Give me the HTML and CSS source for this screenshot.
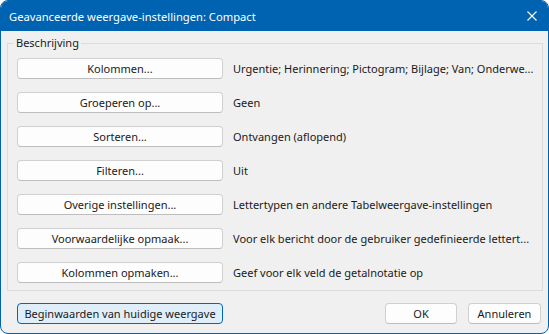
FILE: index.html
```html
<!DOCTYPE html>
<html lang="nl">
<head>
    <meta charset="UTF-8">
    <meta name="viewport" content="width=device-width, initial-scale=1.0">
    <title>Geavanceerde weergave-instellingen: Compact</title>
    <link rel="stylesheet" href="styles.css">
</head>
<body>
    <div class="window">
        <div class="titlebar">
            <span class="title">Geavanceerde weergave-instellingen: Compact</span>
            <svg class="close" width="10" height="10" viewBox="0 0 10 10">
                <path d="M0.5 0.5 L9.5 9.5 M9.5 0.5 L0.5 9.5" stroke="#fff" stroke-width="1.1" fill="none"/>
            </svg>
        </div>

        <fieldset class="group">
            <legend>Beschrijving</legend>
            <div class="row">
                <button class="btn wide">Kolommen...</button>
                <span class="desc">Urgentie; Herinnering; Pictogram; Bijlage; Van; Onderwe...</span>
            </div>
            <div class="row">
                <button class="btn wide">Groeperen op...</button>
                <span class="desc">Geen</span>
            </div>
            <div class="row">
                <button class="btn wide">Sorteren...</button>
                <span class="desc">Ontvangen (aflopend)</span>
            </div>
            <div class="row">
                <button class="btn wide">Filteren...</button>
                <span class="desc">Uit</span>
            </div>
            <div class="row">
                <button class="btn wide">Overige instellingen...</button>
                <span class="desc">Lettertypen en andere Tabelweergave-instellingen</span>
            </div>
            <div class="row">
                <button class="btn wide">Voorwaardelijke opmaak...</button>
                <span class="desc">Voor elk bericht door de gebruiker gedefinieerde lettert...</span>
            </div>
            <div class="row">
                <button class="btn wide">Kolommen opmaken...</button>
                <span class="desc">Geef voor elk veld de getalnotatie op</span>
            </div>
        </fieldset>

        <div class="footer">
            <button class="btn wide primary">Beginwaarden van huidige weergave</button>
            <div class="spacer"></div>
            <button class="btn ok">OK</button>
            <button class="btn cancel">Annuleren</button>
        </div>
    </div>
</body>
</html>
```

FILE: styles.css
```css
body {
    margin: 0;
    background: #ffffff;
    font-family: "Noto Sans", "Open Sans", sans-serif;
    font-size: 11px;
    color: #1a1a1a;
}

.window {
    box-sizing: border-box;
    width: 549px;
    height: 334px;
    border: 1px solid #0063b1;
    border-radius: 8px;
    background: #f0f0f0;
    overflow: hidden;
}

.titlebar {
    height: 30px;
    background: #0063b1;
    color: #ffffff;
    display: flex;
    align-items: center;
    padding: 0 11px 0 8px;
}

.title {
    flex: 1;
    font-size: 11.2px;
}

.close {
    display: block;
}

.group {
    margin: 4px 6px 0 6px;
    padding: 7px 9px 7px 9px;
    border: 1px solid #dcdcdc;
    display: flex;
    flex-direction: column;
    gap: 13px;
}

.group legend {
    padding: 0 2px;
    margin-left: -3px;
    line-height: 16px;
}

.row {
    display: flex;
    align-items: center;
}

.btn {
    box-sizing: border-box;
    height: 21px;
    padding: 0;
    font-family: inherit;
    font-size: 11px;
    color: #1a1a1a;
    background: #fdfdfd;
    border: 1px solid #d0d0d0;
    border-bottom-color: #bdbdbd;
    border-radius: 4px;
    white-space: nowrap;
}

.btn.wide {
    width: 206px;
}

.desc {
    margin-left: 10px;
    white-space: nowrap;
}

.footer {
    display: flex;
    margin: 12px 7px 0 16px;
}

.spacer {
    flex: 1;
}

.btn.primary {
    background: #e0eef9;
    border: 1px solid #0067c0;
}

.btn.ok {
    width: 72px;
}

.btn.cancel {
    width: 73px;
    margin-left: 11px;
}
```
